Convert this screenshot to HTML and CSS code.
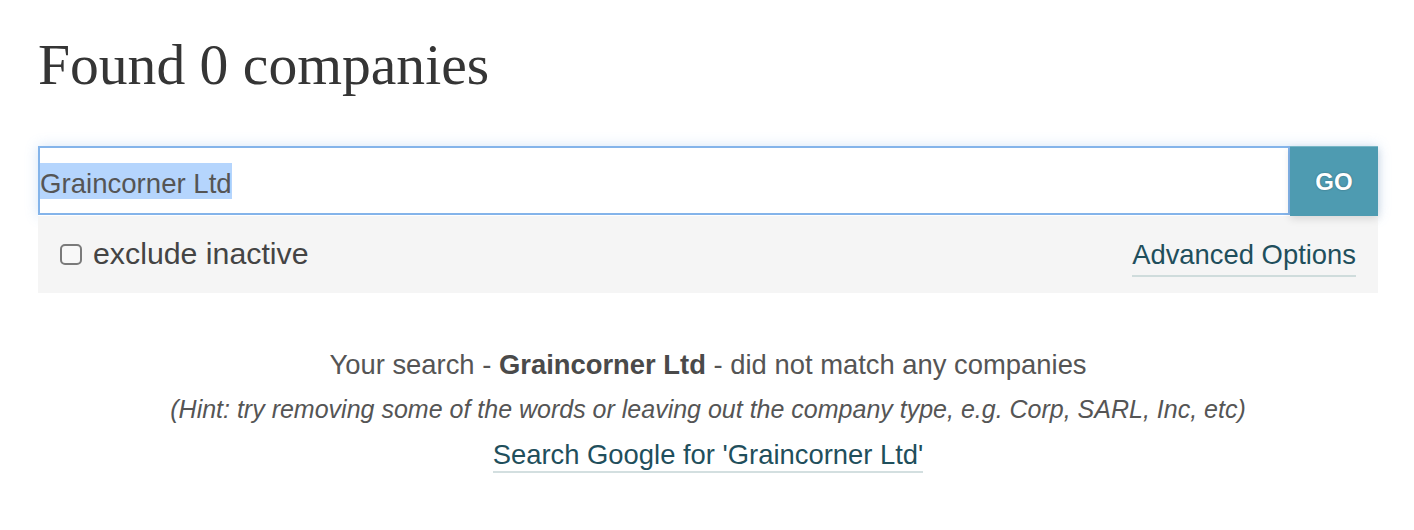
FILE: index.html
```html
<!DOCTYPE html>
<html lang="en">
<head>
<meta charset="utf-8">
<title>Found 0 companies</title>
<link rel="stylesheet" href="styles.css">
</head>
<body>
<main class="page">
  <h1 class="title">Found 0 companies</h1>
  <form class="search">
    <div class="search-row">
      <div class="search-field"><span class="selected">Graincorner Ltd</span></div>
      <button type="button" class="go">GO</button>
    </div>
    <div class="options">
      <label class="exclude"><span class="box"></span>exclude inactive</label>
      <a class="adv" href="#">Advanced Options</a>
    </div>
  </form>
  <section class="results">
    <p class="msg">Your search - <strong>Graincorner Ltd</strong> - did not match any companies</p>
    <p class="hint">(Hint: try removing some of the words or leaving out the company type, e.g. Corp, SARL, Inc, etc)</p>
    <p class="msg"><a class="google" href="#">Search Google for 'Graincorner Ltd'</a></p>
  </section>
</main>
</body>
</html>
```
FILE: styles.css
```css
html, body {
  margin: 0;
  padding: 0;
  background: #ffffff;
}
body {
  font-family: "Liberation Sans", Arial, sans-serif;
  color: #555555;
}
.page {
  width: 1340px;
  margin-left: 38px;
}
.title {
  margin: 33px 0 0 0;
  font-family: "Liberation Serif", "Times New Roman", serif;
  font-weight: normal;
  font-size: 57.6px;
  line-height: 64px;
  color: #353535;
}
.search {
  margin-top: 49px;
}
.search-row {
  display: flex;
  height: 70px;
  box-shadow: 0 0 12px rgba(102, 160, 230, 0.28);
}
.search-field {
  flex: 1;
  box-sizing: border-box;
  height: 69px;
  border: 2px solid #84b4ea;
  background: #ffffff;
  display: flex;
  align-items: center;
  padding-left: 0;
}
.selected {
  display: inline-block;
  font-size: 27.6px;
  line-height: 31px;
  padding-top: 5px;
  background: #b5d5fd;
  color: #555555;
}
.go {
  width: 88px;
  height: 70px;
  margin: 0;
  padding: 0;
  border: 0;
  border-top: 1px solid #78b6c6;
  background: #4e9bb1;
  color: #ffffff;
  font-family: "Liberation Sans", Arial, sans-serif;
  font-weight: bold;
  font-size: 24px;
  text-shadow: 0 0 2px rgba(0, 0, 0, 0.35);
  box-shadow: 0 3px 8px rgba(0, 0, 0, 0.12);
}
.options {
  display: flex;
  align-items: center;
  justify-content: space-between;
  height: 77px;
  padding: 0 22px;
  background: #f5f5f5;
}
.exclude {
  display: flex;
  align-items: center;
  font-size: 30.3px;
  color: #444444;
  margin-top: -2px;
}
.box {
  box-sizing: border-box;
  width: 22px;
  height: 21px;
  border: 2px solid #7a7a7a;
  border-radius: 5px;
  background: #f8f8f8;
  margin-right: 11px;
  margin-top: 2px;
}
.adv {
  font-size: 27.4px;
  color: #1f4f5c;
  text-decoration: none;
  padding-bottom: 4.5px;
  border-bottom: 2px solid #cfdcdc;
  margin-top: 6.5px;
}
.results {
  margin-top: 49px;
  text-align: center;
}
.results p {
  margin: 0;
}
.msg {
  font-size: 27.4px;
  line-height: 45px;
}
.msg strong {
  color: #4a4a4a;
}
.hint {
  font-size: 25px;
  line-height: 45px;
  font-style: italic;
}
.google {
  color: #1f4f5c;
  text-decoration: none;
  padding-bottom: 1px;
  border-bottom: 2px solid #d3dfe0;
}
```
